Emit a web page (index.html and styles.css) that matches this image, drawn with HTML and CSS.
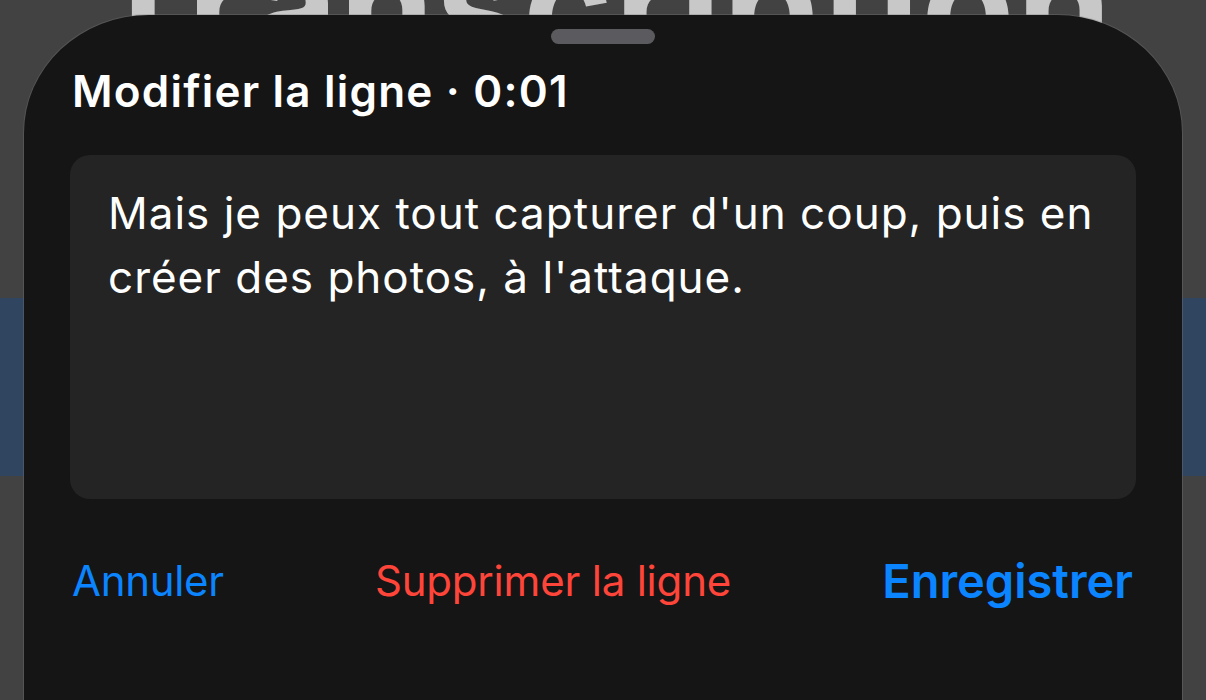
FILE: index.html
```html
<!DOCTYPE html>
<html lang="fr">
<head>
<meta charset="utf-8">
<title>Modifier la ligne</title>
<link rel="stylesheet" href="styles.css">
</head>
<body>
<div class="page">
  <h1 class="page-title">Transcription</h1>
  <div class="page-band"></div>
</div>

<div class="sheet">
  <div class="grabber"></div>
  <h2 class="sheet-title">Modifier la ligne · 0:01</h2>
  <div class="editor">Mais je peux tout capturer d'un coup, puis en créer des photos, à l'attaque.</div>
  <div class="actions">
    <span class="btn btn-cancel">Annuler</span>
    <span class="btn btn-delete">Supprimer la ligne</span>
    <span class="btn btn-save">Enregistrer</span>
  </div>
</div>
</body>
</html>
```

FILE: styles.css
```css
html, body {
  margin: 0;
  padding: 0;
}
body {
  width: 1206px;
  height: 700px;
  overflow: hidden;
  background: #424242;
  font-family: Inter, "Noto Sans", "Liberation Sans", sans-serif;
  position: relative;
}
.page {
  display: flex;
  flex-direction: column;
}
.page-title {
  margin: -116px 0 0 0;
  height: 414px;
  font-size: 152px;
  font-weight: 700;
  color: #c8c8c8;
  text-align: center;
  letter-spacing: 2px;
  line-height: 240px;
}
.page-band {
  height: 178px;
  background: #30455f;
}
.sheet {
  position: absolute;
  left: 24px;
  right: 24px;
  top: 15px;
  bottom: 0;
  background: #151515;
  border-radius: 125px 125px 0 0 / 118px 118px 0 0;
  box-shadow: 0 0 0 1px rgba(120,120,120,0.35);
  display: flex;
  flex-direction: column;
  padding: 14px 46px 0 46px;
}
.grabber {
  align-self: center;
  width: 104px;
  height: 15px;
  border-radius: 8px;
  background: #5b5b5f;
  flex: none;
}
.sheet-title {
  margin: 12px 0 0 2px;
  font-size: 44px;
  font-weight: 600;
  color: #ffffff;
  line-height: 70px;
  letter-spacing: 1.2px;
}
.editor {
  margin-top: 29px;
  height: 344px;
  box-sizing: border-box;
  background: #242424;
  border-radius: 20px;
  padding: 26px 30px 0 38px;
  color: #ffffff;
  font-size: 44px;
  line-height: 64px;
  letter-spacing: 1px;
}
.actions {
  display: flex;
  justify-content: space-between;
  align-items: center;
  margin: 52px 3px 0 2px;
}
.btn {
  font-size: 42px;
  line-height: 60px;
}
.btn-cancel { color: #0a84ff; letter-spacing: -0.3px; }
.btn-delete { color: #ff453a; letter-spacing: -0.2px; }
.btn-save {
  color: #0a84ff;
  font-weight: 600;
  font-size: 47px;
  letter-spacing: 0;
}
```
